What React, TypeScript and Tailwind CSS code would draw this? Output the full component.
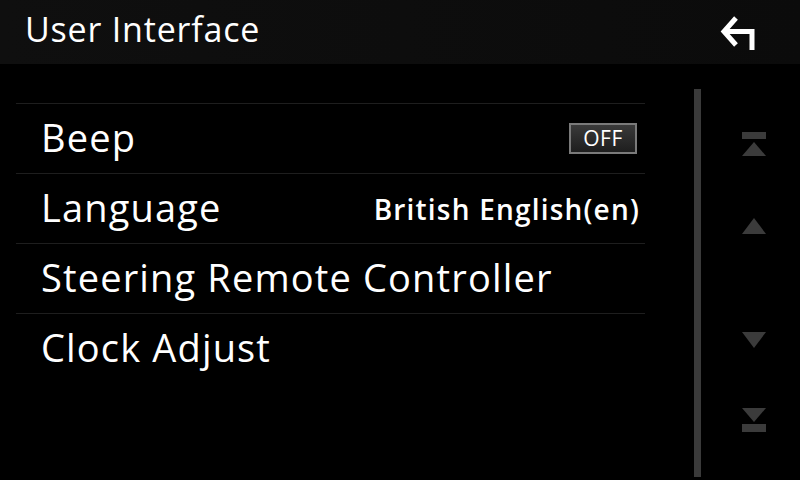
const rows = [
  { label: 'Beep', value: 'toggle' },
  { label: 'Language', value: 'British English(en)' },
  { label: 'Steering Remote Controller', value: '' },
  { label: 'Clock Adjust', value: '' },
];

const BackIcon = () => (
  <svg width="40" height="40" viewBox="0 0 40 40" fill="none" stroke="#fff" strokeWidth="5">
    <path d="M18 6 L6 19.5 L18 33" strokeLinejoin="miter" />
    <path d="M6 19.5 H34 V38" strokeLinejoin="miter" />
  </svg>
);

const SkipTop = () => (
  <svg width="24" height="24" viewBox="0 0 24 24" fill="#3b3b3b">
    <rect x="0" y="0" width="24" height="7" />
    <polygon points="12,10 24,24 0,24" />
  </svg>
);

const Up = () => (
  <svg width="24" height="16" viewBox="0 0 24 16" fill="#3b3b3b">
    <polygon points="12,0 24,16 0,16" />
  </svg>
);

const Down = () => (
  <svg width="24" height="16" viewBox="0 0 24 16" fill="#3b3b3b">
    <polygon points="0,0 24,0 12,16" />
  </svg>
);

const SkipBottom = () => (
  <svg width="24" height="24" viewBox="0 0 24 24" fill="#3b3b3b">
    <polygon points="0,0 24,0 12,14" />
    <rect x="0" y="16" width="24" height="8" />
  </svg>
);

export default function App() {
  return (
    <div className="flex h-[480px] w-[800px] flex-col overflow-hidden bg-black font-['Open_Sans',sans-serif] text-white">
      <header className="flex h-16 items-center justify-between bg-gradient-to-r from-[#0f0f0f] to-[#0b0b0b] pl-[25px] pr-[42px]">
        <h1 className="pb-[6px] text-[34px] leading-none tracking-[0.8px]">User Interface</h1>
        <BackIcon />
      </header>

      <main className="flex flex-1">
        <ul className="ml-4 mt-[39px] w-[629px]">
          {rows.map((row) => (
            <li
              key={row.label}
              className="flex h-[70px] items-center justify-between border-t border-[#1e1e1e] pl-[25px] pr-[5px]"
            >
              <span className="pb-[4px] text-[38px] leading-none tracking-[1.15px]">{row.label}</span>
              {row.value === 'toggle' ? (
                <span className="mr-[3px] flex h-[31px] w-[68px] items-center justify-center border-2 border-[#7a7a7a] bg-gradient-to-b from-[#3a3a3a] to-[#1e1e1e] text-[21px] leading-none tracking-[0.5px]">
                  OFF
                </span>
              ) : (
                <span className="text-[28px] font-semibold leading-none tracking-[1.2px]">{row.value}</span>
              )}
            </li>
          ))}
        </ul>

        <div className="ml-[49px] mt-[25px] h-[388px] w-[7px] bg-[#3a3a3a]" />

        <div className="ml-[41px] mt-[68px] flex flex-col">
          <SkipTop />
          <div className="mt-[62px]">
            <Up />
          </div>
          <div className="mt-[98px]">
            <Down />
          </div>
          <div className="mt-[60px]">
            <SkipBottom />
          </div>
        </div>
      </main>
    </div>
  );
}
